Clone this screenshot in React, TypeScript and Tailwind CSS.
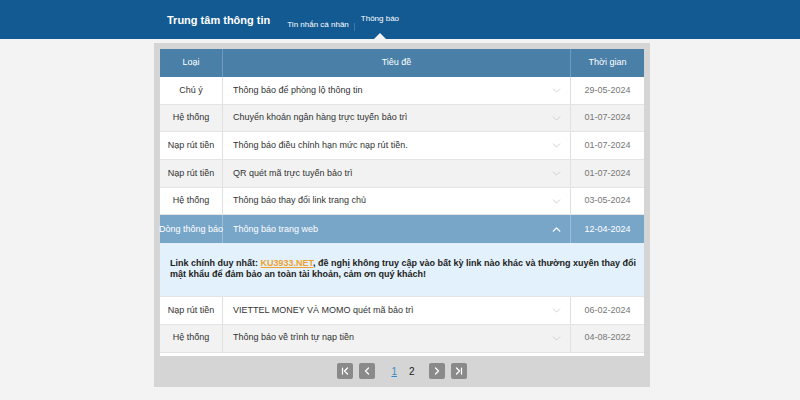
import React from 'react';
import { ChevronDown, ChevronUp, ChevronFirst, ChevronLast, ChevronLeft, ChevronRight } from 'lucide-react';

type Notice = { type: string; title: string; date: string; open?: boolean };

const notices: Notice[] = [
  { type: 'Chú ý', title: 'Thông báo để phòng lộ thông tin', date: '29-05-2024' },
  { type: 'Hệ thống', title: 'Chuyển khoản ngân hàng trực tuyến bảo trì', date: '01-07-2024' },
  { type: 'Nạp rút tiền', title: 'Thông báo điều chỉnh hạn mức nạp rút tiền.', date: '01-07-2024' },
  { type: 'Nạp rút tiền', title: 'QR quét mã trực tuyến bảo trì', date: '01-07-2024' },
  { type: 'Hệ thống', title: 'Thông báo thay đổi link trang chủ', date: '03-05-2024' },
  { type: 'Dòng thông báo', title: 'Thông báo trang web', date: '12-04-2024', open: true },
  { type: 'Nạp rút tiền', title: 'VIETTEL MONEY VÀ MOMO quét mã bảo trì', date: '06-02-2024' },
  { type: 'Hệ thống', title: 'Thông báo về trình tự nạp tiền', date: '04-08-2022' },
];

function Row({ n, i }: { n: Notice; i: number }) {
  if (n.open) {
    return (
      <>
        <div className="grid h-[27.7px] grid-cols-[63px_348px_73px] bg-[#78a6c9] text-white">
          <div className="flex items-center justify-center whitespace-nowrap border-r border-[#9cbfd9]">{n.type}</div>
          <div className="flex items-center justify-between border-r border-[#9cbfd9] pl-[10px] pr-[7px]">
            <span>{n.title}</span>
            <ChevronUp className="h-[13px] w-[13px]" strokeWidth={2.5} />
          </div>
          <div className="flex items-center justify-center">{n.date}</div>
        </div>
        <div className="h-[54px] border-b border-[#e4e4e4] bg-[#e2f1fb] pl-[10px] pt-[15px] text-[9px] font-bold leading-[11px] text-[#222]">
          <p className="whitespace-nowrap">
            Link chính duy nhất: <span className="text-[#f0a030] underline">KU3933.NET</span>, đề nghị không truy cập vào bất kỳ link nào khác và thường xuyên thay đổi
          </p>
          <p className="whitespace-nowrap">mật khẩu để đảm bảo an toàn tài khoản, cảm ơn quý khách!</p>
        </div>
      </>
    );
  }
  return (
    <div
      className={
        'grid h-[27.7px] grid-cols-[63px_348px_73px] border-b border-[#e4e4e4] text-[#333] ' +
        (i % 2 === 0 ? 'bg-white' : 'bg-[#f2f2f2]')
      }
    >
      <div className="flex items-center justify-center whitespace-nowrap border-r border-[#e0e0e0]">{n.type}</div>
      <div className="flex items-center justify-between border-r border-[#e0e0e0] pl-[10px] pr-[7px]">
        <span>{n.title}</span>
        <ChevronDown className="h-[13px] w-[13px] text-[#c8c8c8]" strokeWidth={1.5} />
      </div>
      <div className="flex items-center justify-center text-[#777]">{n.date}</div>
    </div>
  );
}

function PageBtn({ children }: { children: React.ReactNode }) {
  return (
    <button className="flex h-[16px] w-[16px] items-center justify-center rounded-[2px] bg-[#8a8a8a] text-white">
      {children}
    </button>
  );
}

export default function App() {
  return (
    <div className="min-h-[400px] bg-[#f3f3f3] font-['Liberation_Sans',Arial,sans-serif]">
      <header className="h-[39px] bg-[#135a92]">
        <div className="flex h-full items-start pl-[167px]">
          <h1 className="mt-[13px] text-[11px] font-bold leading-[14px] text-white">Trung tâm thông tin</h1>
          <span className="ml-[17px] mt-[20px] text-[8px] leading-[10px] text-white">Tin nhắn cá nhân</span>
          <span className="ml-[5px] mt-[23px] h-[8px] w-px bg-[#3f7aa8]" />
          <div className="relative ml-[6px] h-full">
            <span className="mt-[14px] block text-[8px] leading-[10px] text-white">Thông báo</span>
            <span className="absolute bottom-0 left-1/2 h-0 w-0 -translate-x-1/2 border-x-[6px] border-b-[6px] border-x-transparent border-b-[#f3f3f3]" />
          </div>
        </div>
      </header>

      <div className="ml-[154px] mt-[4px] w-[496px] bg-[#d5d5d5] px-[6px] pt-[6px]">
        <div className="bg-white pb-[3px] text-[9px]">
          <div className="grid h-[28px] grid-cols-[63px_348px_73px] bg-[#4a7fa8] text-white">
            <div className="flex items-center justify-center border-r border-[#6e9bbd]">Loại</div>
            <div className="flex items-center justify-center border-r border-[#6e9bbd]">Tiêu đề</div>
            <div className="flex items-center justify-center">Thời gian</div>
          </div>
          {notices.map((n, i) => (
            <Row key={i} n={n} i={i} />
          ))}
        </div>

        <div className="flex h-[31px] items-center justify-center">
          <PageBtn>
            <ChevronFirst className="h-[12px] w-[12px]" strokeWidth={2.5} />
          </PageBtn>
          <span className="ml-[6px]" />
          <PageBtn>
            <ChevronLeft className="h-[12px] w-[12px]" strokeWidth={2.5} />
          </PageBtn>
          <span className="ml-[16px] text-[10px] text-[#3a8ac8] underline">1</span>
          <span className="ml-[12px] text-[10px] text-[#222]">2</span>
          <span className="ml-[14px]" />
          <PageBtn>
            <ChevronRight className="h-[12px] w-[12px]" strokeWidth={2.5} />
          </PageBtn>
          <span className="ml-[6px]" />
          <PageBtn>
            <ChevronLast className="h-[12px] w-[12px]" strokeWidth={2.5} />
          </PageBtn>
        </div>
      </div>
    </div>
  );
}
